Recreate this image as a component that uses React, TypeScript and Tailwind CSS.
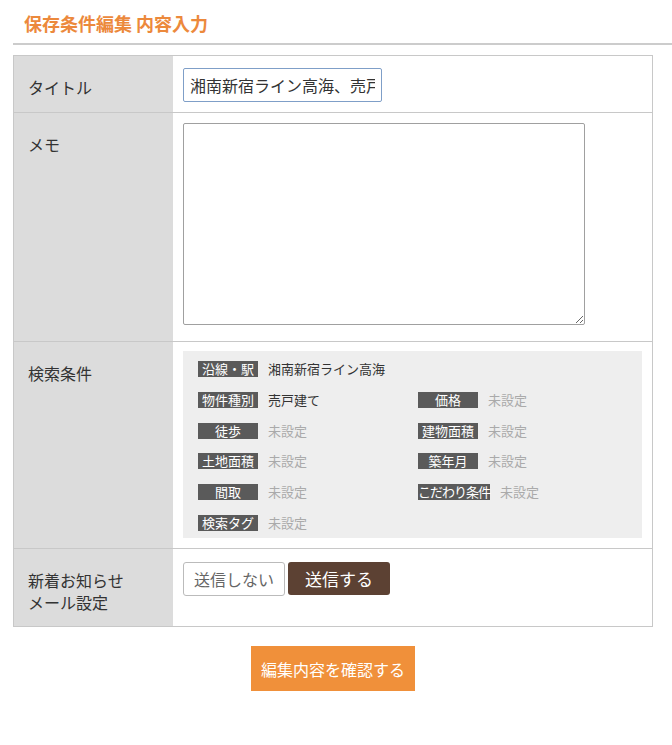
import React from 'react';

const font = "font-['Noto_Sans_CJK_JP','Noto_Sans',sans-serif]";

type Cond = { label: string; value: string; set?: boolean; tight?: boolean };

const Tag = ({ c }: { c: Cond }) => (
  <div className="flex items-center">
    <span
      className={`inline-block min-w-[60px] h-[16px] text-[13px] leading-[16px] text-center bg-[#5a5a5a] text-white ${c.tight ? 'tracking-[-1px]' : ''}`}
    >
      {c.label}
    </span>
    <span className={`ml-[10px] text-[13px] leading-[16px] ${c.set ? 'text-[#333]' : 'text-[#aaa]'}`}>
      {c.value}
    </span>
  </div>
);

const conditionRows: (Cond | null)[][] = [
  [{ label: '沿線・駅', value: '湘南新宿ライン高海', set: true }, null],
  [{ label: '物件種別', value: '売戸建て', set: true }, { label: '価格', value: '未設定' }],
  [{ label: '徒歩', value: '未設定' }, { label: '建物面積', value: '未設定' }],
  [{ label: '土地面積', value: '未設定' }, { label: '築年月', value: '未設定' }],
  [{ label: '間取', value: '未設定' }, { label: 'こだわり条件', value: '未設定', tight: true }],
  [{ label: '検索タグ', value: '未設定' }, null],
];

const Row = ({ label, children, className = '' }: { label: React.ReactNode; children: React.ReactNode; className?: string }) => (
  <div className="grid grid-cols-[159px_1fr] border-t border-[#c8c8c8] first:border-t-0">
    <div className="bg-[#dcdcdc] pl-[14px] pt-[20px] text-[16px] leading-[22px] text-[#333]">{label}</div>
    <div className={`px-[10px] ${className}`}>{children}</div>
  </div>
);

export default function App() {
  return (
    <div className={`${font} min-h-screen bg-white pl-[13px]`}>
      <div className="h-[45px] border-b-2 border-[#cccccc] pl-[11px] pt-[11px]">
        <h1 className="text-[18px] font-bold leading-[24px] text-[#ec893c]">保存条件編集 内容入力</h1>
      </div>

      <div className="mt-[10px] w-[640px] border border-[#c8c8c8]">
        <Row label="タイトル" className="pt-[12px] pb-[10px]">
          <input
            defaultValue="湘南新宿ライン高海、売戸建て"
            className="w-[199px] h-[34px] border border-[#7f9fc8] rounded-[2px] px-[6px] text-[16px] text-[#333] outline-none"
          />
        </Row>

        <Row label="メモ" className="pt-[10px] pb-[16px]">
          <textarea className="block w-[402px] h-[202px] border border-[#a0a0a0] rounded-[2px] outline-none" />
        </Row>

        <Row label="検索条件" className="pt-[9px] pb-[10px]">
          <div className="bg-[#eeeeee] pl-[15px] pt-[3px]">
            {conditionRows.map((r, i) => (
              <div key={i} className="grid grid-cols-[220px_1fr] h-[30.7px] items-center">
                {r.map((c, j) => (c ? <Tag key={j} c={c} /> : <div key={j} />))}
              </div>
            ))}
          </div>
        </Row>

        <Row
          label={
            <>
              新着お知らせ
              <br />
              メール設定
            </>
          }
          className="pt-[13px] pb-[30px]"
        >
          <div className="flex items-start gap-[3px]">
            <button className="w-[102px] h-[34px] border border-[#bbbbbb] rounded-[3px] bg-white text-[16px] text-[#666]">
              送信しない
            </button>
            <button className="w-[102px] h-[33px] rounded-[3px] bg-[#5c4133] text-[17px] text-white">
              送信する
            </button>
          </div>
        </Row>
      </div>

      <div className="w-[640px] flex justify-center mt-[19px]">
        <button className="w-[164px] h-[45px] bg-[#f0903a] text-[16px] text-white">編集内容を確認する</button>
      </div>
    </div>
  );
}
